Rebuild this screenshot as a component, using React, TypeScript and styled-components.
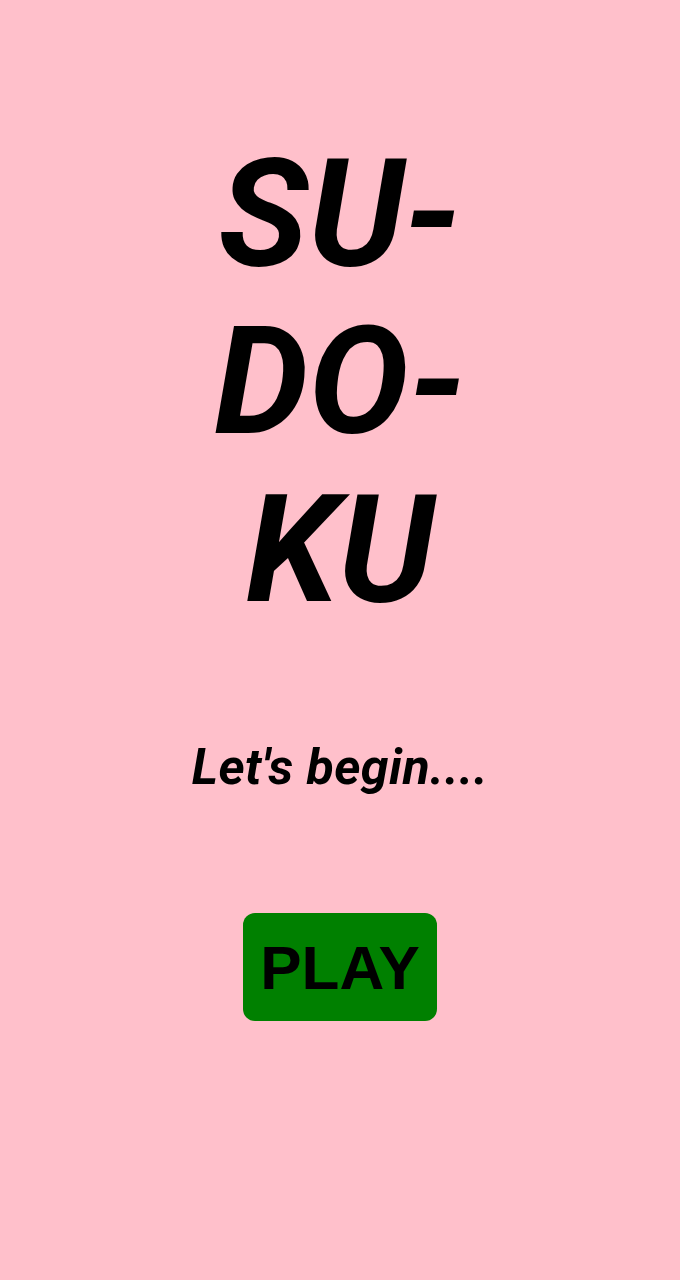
import React from 'react';
import styled, { createGlobalStyle } from 'styled-components';

const GlobalStyle = createGlobalStyle`
  html, body {
    margin: 0;
    padding: 0;
    background: pink;
  }
`;

const Screen = styled.div`
  min-height: 100vh;
  background: pink;
  display: flex;
  flex-direction: column;
  align-items: center;
  padding-top: 130px;
  box-sizing: border-box;
`;

const Title = styled.h1`
  margin: 0;
  font-family: Roboto, 'Liberation Sans', sans-serif;
  font-weight: 700;
  font-style: italic;
  font-size: 150px;
  line-height: 168px;
  text-align: center;
  color: #000;
`;

const Subtitle = styled.p`
  margin: 104px 0 0;
  font-family: Roboto, 'Liberation Sans', sans-serif;
  font-weight: 700;
  font-style: italic;
  font-size: 50px;
  line-height: 58px;
  letter-spacing: 0.5px;
  color: #000;
`;

const PlayButton = styled.button`
  margin-top: 117px;
  width: 194px;
  height: 108px;
  background: green;
  border: none;
  border-radius: 12px;
  font-family: 'Liberation Sans', Arial, sans-serif;
  font-weight: 700;
  font-size: 62px;
  color: #000;
  cursor: pointer;
  display: flex;
  align-items: center;
  justify-content: center;
  padding: 0;
`;

const App: React.FC = () => {
  return (
    <>
      <GlobalStyle />
      <Screen>
        <Title>
          SU-
          <br />
          DO-
          <br />
          KU
        </Title>
        <Subtitle>Let's begin....</Subtitle>
        <PlayButton>PLAY</PlayButton>
      </Screen>
    </>
  );
};

export default App;
